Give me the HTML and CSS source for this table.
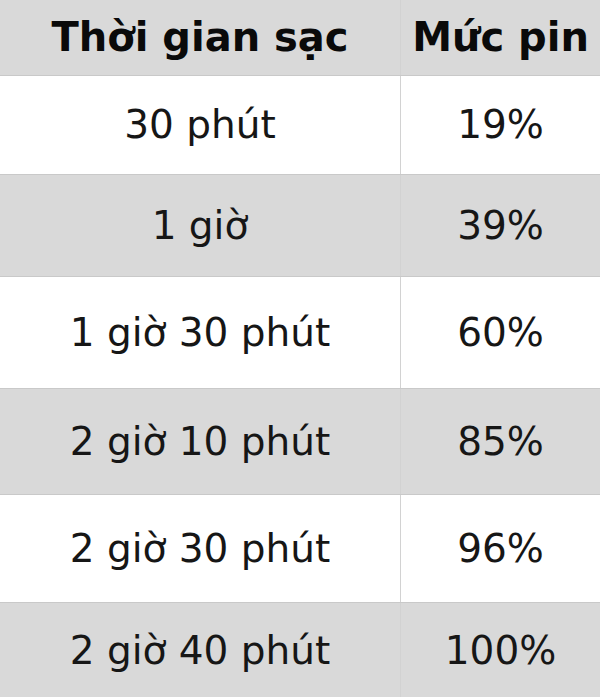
FILE: index.html
```html
<!DOCTYPE html>
<html lang="vi">
<head>
<meta charset="utf-8">
<link rel="stylesheet" href="styles.css">
</head>
<body>
<table class="charge">
  <thead>
    <tr class="row head"><th class="c1">Thời gian sạc</th><th class="c2">Mức pin</th></tr>
  </thead>
  <tbody>
    <tr class="row r1"><td>30 phút</td><td>19%</td></tr>
    <tr class="row r2 alt"><td>1 giờ</td><td>39%</td></tr>
    <tr class="row r3"><td>1 giờ 30 phút</td><td>60%</td></tr>
    <tr class="row r4 alt"><td>2 giờ 10 phút</td><td>85%</td></tr>
    <tr class="row r5"><td>2 giờ 30 phút</td><td>96%</td></tr>
    <tr class="row r6 alt"><td>2 giờ 40 phút</td><td>100%</td></tr>
  </tbody>
</table>
</body>
</html>
```
FILE: styles.css
```css
html, body {
  margin: 0;
  padding: 0;
  background: #ffffff;
}
.charge {
  width: 601px;
  border-collapse: collapse;
  table-layout: fixed;
  font-family: "DejaVu Sans", sans-serif;
  color: #161616;
}
.charge th, .charge td {
  text-align: center;
  vertical-align: middle;
  padding: 0;
  border-right: 1px solid #d2d2d2;
  border-bottom: 1px solid #c9c9c9;
}
.charge .c1 { width: 400px; }
.charge th {
  font-weight: 700;
  font-size: 40px;
  color: #0a0a0a;
  background: #d9d9d9;
}
.charge td {
  font-weight: 400;
  font-size: 39px;
}
.row.alt td { background: #d9d9d9; }
.head { height: 75px; }
.r1 { height: 99px; }
.r2 { height: 102px; }
.r3 { height: 112px; }
.r4 { height: 106px; }
.r5 { height: 108px; }
.r6 { height: 96px; }
```
